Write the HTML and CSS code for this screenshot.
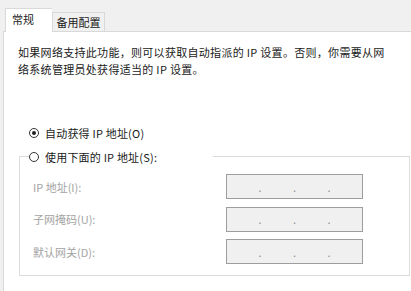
FILE: index.html
```html
<!DOCTYPE html>
<html lang="zh-CN">

<head>
    <meta charset="UTF-8">
    <title>Internet 协议版本 4 (TCP/IPv4) 属性</title>
    <link rel="stylesheet" href="styles.css">
</head>

<body>

    <!-- Tab strip -->
    <div class="tabs">
        <div class="tab active">常规</div>
        <div class="tab">备用配置</div>
    </div>

    <!-- General page -->
    <div class="panel">
        <p class="desc">如果网络支持此功能，则可以获取自动指派的 IP 设置。否则，你需要从网络系统管理员处获得适当的 IP 设置。</p>

        <div class="radio-row">
            <span class="radio checked"></span>
            <span>自动获得 IP 地址(O)</span>
        </div>

        <fieldset class="group">
            <legend class="radio-row">
                <span class="radio"></span>
                <span>使用下面的 IP 地址(S):</span>
            </legend>

            <div class="field">
                <label>IP 地址(I):</label>
                <div class="ip-box"><span>.</span><span>.</span><span>.</span></div>
            </div>
            <div class="field">
                <label>子网掩码(U):</label>
                <div class="ip-box"><span>.</span><span>.</span><span>.</span></div>
            </div>
            <div class="field">
                <label>默认网关(D):</label>
                <div class="ip-box"><span>.</span><span>.</span><span>.</span></div>
            </div>
        </fieldset>

        <div class="radio-row next">
            <span class="radio checked"></span>
            <span>自动获得 DNS 服务器地址(B)</span>
        </div>
    </div>

</body>

</html>
```

FILE: styles.css
```css
/* General Styles */
html,
body {
    margin: 0;
    height: 291px;
    overflow: hidden;
}

body {
    background-color: #f0f0f0;
    font-family: "Noto Sans CJK SC", "Noto Sans", sans-serif;
    font-size: 11px;
    color: #1a1a1a;
}

/* Tabs */
.tabs {
    display: flex;
    align-items: flex-end;
    height: 31px;
    padding-left: 5px;
    position: relative;
    z-index: 1;
}

.tab {
    box-sizing: border-box;
    width: 53px;
    height: 19px;
    line-height: 19px;
    text-align: center;
    border: 1px solid #d9d9d9;
    border-bottom: none;
    background: #f0f0f0;
}

.tab.active {
    width: 47px;
    height: 24px;
    line-height: 20px;
    margin-bottom: -1px;
    background: #ffffff;
    border-right: none;
    text-align: left;
    padding-left: 6px;
}

/* Page */
.panel {
    margin-left: 3px;
    height: 260px;
    padding-left: 14px;
    background: #ffffff;
    border-left: 1px solid #d9d9d9;
    border-top: 1px solid #d9d9d9;
}

.desc {
    margin: 12px 0 0;
    width: 375px;
    line-height: 17px;
    letter-spacing: 0.3px;
}

.radio-row {
    display: flex;
    align-items: center;
    gap: 6px;
    height: 17px;
    margin: 46px 0 0 11px;
    letter-spacing: 0.2px;
}

.radio {
    box-sizing: border-box;
    width: 10px;
    height: 10px;
    border: 1px solid #333;
    border-radius: 50%;
    display: flex;
    align-items: center;
    justify-content: center;
}

.radio.checked::after {
    content: "";
    width: 4px;
    height: 4px;
    border-radius: 50%;
    background: #222;
}

/* Group box */
.group {
    box-sizing: border-box;
    width: 391px;
    margin: 7px 0 0 1px;
    padding: 9px 0 11px 13px;
    border: 1px solid #dcdcdc;
}

.group legend.radio-row {
    margin: 0 0 0 -4px;
    padding: 0 56px 0 0;
}

.field {
    display: flex;
    align-items: center;
    height: 25px;
    margin-bottom: 7.5px;
}

.field:last-child {
    margin-bottom: 0;
}

.field label {
    width: 193px;
    color: #a3a3a3;
}

.ip-box {
    box-sizing: border-box;
    width: 137px;
    height: 25px;
    display: flex;
    justify-content: space-evenly;
    align-items: center;
    background: #f0f0f0;
    border: 1px solid #9d9d9d;
    color: #8a8a8a;
}

.radio-row.next {
    margin-top: 12px;
    color: #c8c8c8;
}
```
